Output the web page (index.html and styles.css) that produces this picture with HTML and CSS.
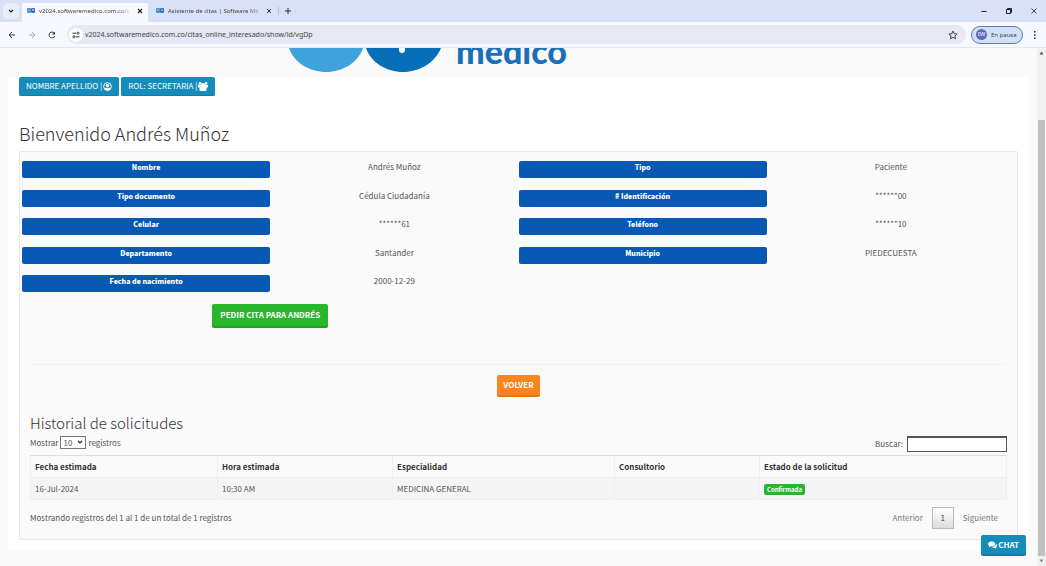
FILE: index.html
```html
<!DOCTYPE html>
<html lang="es">
<head>
<meta charset="utf-8">
<title>Software Médico</title>
<link rel="stylesheet" href="styles.css">
</head>
<body>
<div class="browser">
  <header class="tabstrip">
    <button class="tab-search" aria-label="Buscar pestañas"><svg width="6" height="6" viewBox="0 0 6 6"><path d="M1 2l2 2 2-2" fill="none" stroke="#222" stroke-width="1.2"/></svg></button>
    <div class="tab active">
      <svg class="favicon" width="8" height="6" viewBox="0 0 8 6"><rect width="4" height="5" rx="1" fill="#4b93cc"/><rect x="4" width="4" height="5" rx="1" fill="#2d72b7"/><path d="M1 2h2M5 2h2M6 1v2" stroke="#c5dcf2" stroke-width=".7"/></svg>
      <span class="tab-title">v2024.softwaremedico.com.co/c</span>
      <button class="tab-close" aria-label="Cerrar"><svg width="6" height="6" viewBox="0 0 6 6"><path d="M1 1l4 4M5 1l-4 4" stroke="#222" stroke-width="1.1"/></svg></button>
    </div>
    <div class="tab">
      <svg class="favicon" width="8" height="6" viewBox="0 0 8 6"><rect width="4" height="5" rx="1" fill="#4b93cc"/><rect x="4" width="4" height="5" rx="1" fill="#2d72b7"/><path d="M1 2h2M5 2h2M6 1v2" stroke="#c5dcf2" stroke-width=".7"/></svg>
      <span class="tab-title">Asistente de citas | Software Mé</span>
      <button class="tab-close" aria-label="Cerrar"><svg width="6" height="6" viewBox="0 0 6 6"><path d="M1 1l4 4M5 1l-4 4" stroke="#333" stroke-width="1"/></svg></button>
    </div>
    <button class="new-tab" aria-label="Nueva pestaña"><svg width="8" height="8" viewBox="0 0 8 8"><path d="M4 1v6M1 4h6" stroke="#333" stroke-width="1"/></svg></button>
    <div class="window-controls">
      <button aria-label="Minimizar"><svg width="8" height="8" viewBox="0 0 8 8"><path d="M1.500 4.500h5" stroke="#222"/></svg></button>
      <button aria-label="Restaurar"><svg width="8" height="8" viewBox="0 0 8 8"><path d="M1.500 2.500h4v4h-4zM2.500 2.500v-1h4v4h-1" fill="none" stroke="#222"/></svg></button>
      <button aria-label="Cerrar ventana"><svg width="8" height="8" viewBox="0 0 8 8"><path d="M1.500 1.500l5 5M6.500 1.500l-5 5" stroke="#222" stroke-width=".8"/></svg></button>
    </div>
  </header>
  <nav class="toolbar">
    <button class="nav-button" aria-label="Atrás"><svg width="8" height="8" viewBox="0 0 8 8"><path d="M7 4H1.200M4 1L1 4l3 3" fill="none" stroke="#333"/></svg></button>
    <button class="nav-button" aria-label="Adelante"><svg width="8" height="8" viewBox="0 0 8 8"><path d="M1 4h5.800M4 1l3 3-3 3" fill="none" stroke="#aaa"/></svg></button>
    <button class="nav-button" aria-label="Recargar"><svg width="8" height="8" viewBox="0 0 8 8"><path d="M6.700 5A2.900 2.900 0 1 1 6.300 2.200" fill="none" stroke="#333"/><path d="M7 .6v2.900H4.100z" fill="#333"/></svg></button>
    <div class="omnibox">
      <button class="site-info" aria-label="Información del sitio"><svg width="8" height="8" viewBox="0 0 8 8"><path d="M.5 2.200h3.500M4 5.800h3.500" stroke="#333"/><circle cx="6" cy="2.200" r="1.100" fill="none" stroke="#333" stroke-width=".9"/><circle cx="2" cy="5.800" r="1.100" fill="none" stroke="#333" stroke-width=".9"/></svg></button>
      <input class="url" aria-label="Dirección" value="v2024.softwaremedico.com.co/citas_online_interesado/show/id/vgDp">
      <button class="star" aria-label="Favorito"><svg width="10" height="10" viewBox="0 0 10 10"><path d="M5 1l1.200 2.700 2.900.3-2.200 1.900.7 2.900L5 7.300 2.400 8.800l.7-2.900L.9 4l2.900-.3z" fill="none" stroke="#333" stroke-width=".9"/></svg></button>
    </div>
    <button class="profile"><span class="avatar">IW</span>En pausa</button>
    <button class="menu" aria-label="Menú"><svg width="4" height="10" viewBox="0 0 4 10"><path d="M1 1h1.500v1.500H1zM1 4.200h1.500v1.500H1zM1 7.400h1.500v1.500H1z" fill="#222"/></svg></button>
  </nav>
  <div class="viewport">
    <div class="page">
      <div class="brand">
        <svg width="152" height="25" viewBox="0 0 152 25"><path d="M0 0C5 15 21 24 37 24S69 15 74 0z" fill="#3fa2dc"/><path d="M77 0c5 15 21 24 37 24s32-9 38-24z" fill="#076eb8"/><path d="M110 0h6v2a3 3 0 0 1-6 0z" fill="#fff"/></svg>
        <span class="brand-name">médico</span>
      </div>
      <main class="sheet">
        <div class="user-bar">
          <button class="btn info">NOMBRE APELLIDO | <svg width="9" height="9" viewBox="0 0 18 18"><circle cx="9" cy="9" r="7.700" fill="none" stroke="#fff" stroke-width="2"/><circle cx="9" cy="7" r="3.500" fill="#fff"/><path d="M3 14c1-3 3-2.500 6-2.500s5-.5 6 2.500c-3 4-9 4-12 0z" fill="#fff"/></svg></button>
          <button class="btn info">ROL: SECRETARIA | <svg width="10" height="9" viewBox="0 0 20 18"><circle cx="4" cy="3" r="2.800" fill="#fff"/><circle cx="16" cy="3" r="2.800" fill="#fff"/><circle cx="10" cy="6" r="4" fill="#fff"/><path d="M0 6h20v5H0zM3 17V11q1-2 3-2h8q2 0 3 2v6q-1 1-2 1H5q-1 0-2-1z" fill="#fff"/></svg></button>
        </div>
        <h1>Bienvenido Andrés Muñoz</h1>
        <section class="well">
          <dl class="details">
            <dt>Nombre</dt><dd>Andrés Muñoz</dd><dt>Tipo</dt><dd>Paciente</dd>
            <dt>Tipo documento</dt><dd>Cédula Ciudadanía</dd><dt># Identificación</dt><dd>******00</dd>
            <dt>Celular</dt><dd>******61</dd><dt>Teléfono</dt><dd>******10</dd>
            <dt>Departamento</dt><dd>Santander</dd><dt>Municipio</dt><dd>PIEDECUESTA</dd>
            <dt>Fecha de nacimiento</dt><dd>2000-12-29</dd>
          </dl>
          <div class="request"><button class="btn success">PEDIR CITA PARA ANDRÉS</button></div>
          <div class="history">
            <div class="back"><button class="btn warning">VOLVER</button></div>
            <h2>Historial de solicitudes</h2>
            <div class="table-tools">
              <label class="length">Mostrar
                <select><option>10</option></select>
                registros</label>
              <label class="search">Buscar: <input type="search"></label>
            </div>
            <table>
              <colgroup><col class="c-date"><col class="c-time"><col class="c-spec"><col class="c-room"><col></colgroup>
              <thead><tr><th>Fecha estimada</th><th>Hora estimada</th><th>Especialidad</th><th>Consultorio</th><th>Estado de la solicitud</th></tr></thead>
              <tbody><tr><td>16-Jul-2024</td><td>10:30 AM</td><td>MEDICINA GENERAL</td><td></td><td><span class="label">Confirmada</span></td></tr></tbody>
            </table>
            <div class="table-foot">
              <span>Mostrando registros del 1 al 1 de un total de 1 registros</span>
              <div class="pager"><a href="#">Anterior</a><a href="#" class="current">1</a><a href="#">Siguiente</a></div>
            </div>
          </div>
        </section>
      </main>
    </div>
    <div class="scrollbar">
      <svg width="9" height="10" viewBox="0 0 9 10"><path d="M2.500 6.500h4l-2-3z" fill="#555"/></svg>
      <div class="thumb"></div>
      <svg width="9" height="10" viewBox="0 0 9 10"><path d="M2.500 3.500h4l-2 3z" fill="#888"/></svg>
    </div>
    <button class="btn info chat"><svg width="9" height="8" viewBox="0 0 20 16"><path d="M8 0c5 0 8 2.500 8 5.500S13 11 8 11l-2-.2Q4 13 1 13q2-2 1.500-3.500Q0 8 0 5.500C0 2.500 3 0 8 0z" fill="#fff"/><path d="M17.500 5q2.500 1.500 2.500 4t-2.500 4q0 1.500 1.500 3-3 0-5-2-4 .5-6.500-1.500Q17 12 17.500 5z" fill="#fff"/></svg>CHAT</button>
  </div>
</div>
</body>
</html>
```
FILE: styles.css
```css
* { box-sizing: border-box; }
body {
  margin: 0;
  font: 8px/12px "Noto Sans CJK SC", "Open Sans", sans-serif;
  color: #555;
  background: #fafafa;
}
button, input, select { font: inherit; color: inherit; }
button { border: 0; padding: 0; background: none; }
svg { display: block; flex: none; }
.browser { display: flex; flex-direction: column; height: 100vh; }

/* Browser frame */
.tabstrip, .toolbar { font-family: "Noto Sans", sans-serif; font-size: 7px; color: #444; display: flex; flex: none; align-items: center; }
.tabstrip { height: 22px; background: #d9e1f6; padding-left: 3px; font-size: 6px; }
.tab-search { display: flex; align-items: center; justify-content: center; width: 16px; height: 16px; border-radius: 5px; background: #e9eefb; margin-right: 3px; }
.tab { display: flex; align-items: center; width: 130px; height: 18px; padding: 0 5px; gap: 4px; }
.tab.active { width: 126px; background: #f8f9fe; border-radius: 6px 6px 0 0; }
.tab + .tab { padding-left: 8px; padding-right: 6px; }
.tab-title { flex: 1; white-space: nowrap; mask-image: linear-gradient(90deg, #000 85%, transparent); }
.tab.active { height: 22px; background: linear-gradient(#d9e1f6 3px, #f8f9fe 3px); }
.new-tab { border-left: 1px solid #a9c4f5; padding-left: 5px; }
.window-controls { display: flex; margin-left: auto; gap: 17px; padding-right: 8px; }
.toolbar { height: 26px; background: #f8f9fe; border-bottom: 1px solid #e5e7ee; padding: 0 9px 0 8px; }
.nav-button { width: 8px; margin-right: 12px; }
.omnibox { flex: 1; display: flex; align-items: center; height: 19px; border-radius: 10px; background: #e6e8f3; padding: 0 8px 0 2px; margin-left: -1px; }
.site-info { display: flex; align-items: center; justify-content: center; width: 14px; height: 14px; border-radius: 50%; background: #fff; margin-right: 2px; }
.url { flex: 1; min-width: 0; border: 0; padding: 0; background: none; }
.profile { display: flex; align-items: center; gap: 4px; height: 18px; width: 52px; margin: 0 10px 0 5px; padding-left: 4px; border: 1px solid #68799d; border-radius: 9px; background: #cfe0fb; white-space: nowrap; font-size: 6px; }
.avatar { width: 11px; height: 11px; border-radius: 50%; background: #5c6bc0; color: #fff; font-size: 6px; line-height: 11px; text-align: center; flex: none; }

/* Page */
.viewport { position: relative; flex: 1; min-height: 0; display: flex; overflow: hidden; }
.page { flex: 1; min-width: 0; padding: 0 9px 0 8px; }
.brand { display: flex; height: 29px; overflow: hidden; padding-left: 281px; gap: 15px; }
.brand-name { font: 900 34px/32px Lato, sans-serif; color: #1b6fb8; margin-top: -13px; }
.sheet { background: #fff; padding: 0 10px 11px 11px; }
.user-bar { display: flex; gap: 2px; }
.btn { display: inline-flex; align-items: center; justify-content: center; border-radius: 2px; color: #fff; white-space: nowrap; }
.info { background: #158cba; border-bottom: 1px solid #127ba3; }
.user-bar .btn { height: 19px; padding: 0 7px; gap: 1px; }
h1, h2 { font-weight: 300; color: #333; margin: 0; }
h1 { font-size: 18px; line-height: 24px; padding: 25px 0 6px; }
.well { background: #fafafa; border: 1px solid #e8e8e8; border-radius: 2px; padding: 9px 2px; }
.details { display: grid; grid-template-columns: repeat(4, 1fr); grid-auto-rows: 17px; align-content: space-between; min-height: 131px; margin: 0; text-align: center; }
.details dt { background: #0859b3; color: #fff; font-weight: 900; font-size: 7px; border-radius: 2px; }
.details dd { margin: 0; }
.request { display: grid; grid-template-columns: 1fr 1fr; justify-items: center; padding: 12px 0 36px; }
.success { background: #28b62c; border-bottom: 2px solid #23a127; font-weight: 700; height: 24px; padding: 0 8px; }
.history { margin: 0 8px; border-top: 1px solid #f2f2f2; }
.back { display: flex; justify-content: center; padding: 10px 0 14px; }
.warning { background: #f8851f; border-bottom: 2px solid #ee7500; font-weight: 700; height: 22px; padding: 0 6px; }
h2 { font-size: 15px; line-height: 24px; }
.table-tools { display: flex; justify-content: space-between; align-items: flex-start; padding: 1px 0 3px; }
.length, .search { display: flex; align-items: center; gap: 2px; }
.search { gap: 4px; }
select { width: 26px; height: 13px; padding: 0 2px; border: 1px solid #777; border-radius: 0; background: #fff url("data:image/svg+xml,%3Csvg xmlns='http://www.w3.org/2000/svg' width='6' height='5'%3E%3Cpath d='M1 1l2 2 2-2' fill='none' stroke='%23222' stroke-width='1.200'/%3E%3C/svg%3E") no-repeat right 2px center; appearance: none; line-height: 11px; }
.search input { appearance: none; width: 100px; height: 16px; border: 1px solid #555; border-top-width: 2px; border-radius: 0; padding: 0 2px; background: #fff; }
table { width: 100%; table-layout: fixed; border-collapse: collapse; border-top: 1px solid #ddd; }
.c-date { width: 187px; }
.c-time { width: 175px; }
.c-spec { width: 222px; }
.c-room { width: 145px; }
th, td { height: 22px; padding: 0 4px; text-align: left; border: 1px solid #f0f0f0; }
th { color: #333; border-top-color: #ddd; }
td { background: #f5f5f5; }
.label { display: inline-block; vertical-align: middle; background: #28b62c; color: #fff; font-weight: 700; font-size: 6px; line-height: 11px; padding: 0 3px; border-radius: 2px; }
.table-foot { display: flex; justify-content: space-between; align-items: center; padding-top: 7px; padding-bottom: 1px; }
.pager { display: flex; align-items: center; }
.pager a { color: #777; text-decoration: none; padding: 0 9px; }
.pager .current { border: 1px solid #bbb; background: linear-gradient(#fff, #dcdcdc); width: 22px; line-height: 20px; padding: 0; text-align: center; color: #444; }
.scrollbar { width: 9px; display: flex; flex-direction: column; background: #f1f1f1; }
.thumb { flex: 1; margin: 62px 1px 0; background: #c1c1c1; }
.chat { position: absolute; right: 20px; bottom: 10px; height: 21px; padding: 0 7px; gap: 1px; font-size: 8px; font-weight: 700; border-bottom-width: 2px; }
```
